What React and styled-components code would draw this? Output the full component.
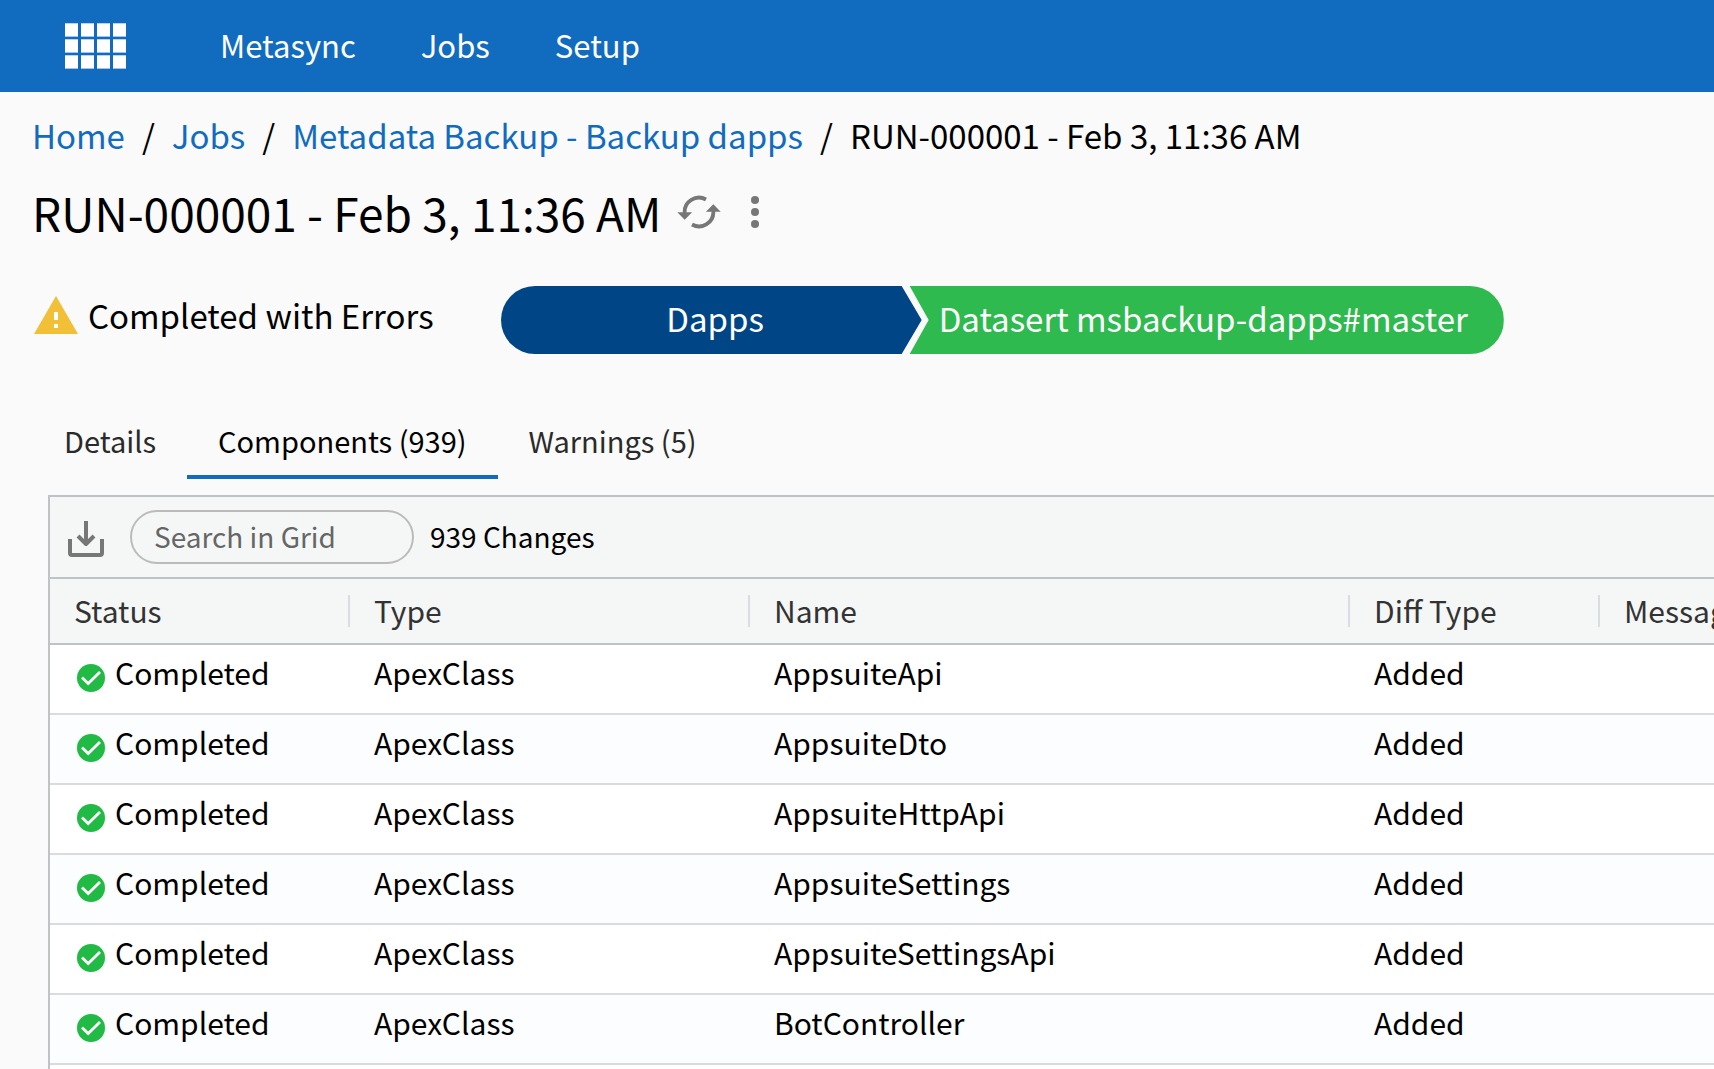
import React from 'react'
import styled, { createGlobalStyle } from 'styled-components'

const GlobalStyle = createGlobalStyle`
  * {
    box-sizing: border-box;
  }

  body {
    margin: 0;
    background: #fafafa;
    color: #000;
    font-family: "Noto Sans CJK SC", "Noto Sans", sans-serif;
    font-size: 30px;
    line-height: 40px;
  }

  button, input {
    font: inherit;
    color: inherit;
  }

  a {
    text-decoration: none;
  }
`;

const Page = styled.div`
  display: flex;
  flex-direction: column;
  height: 100vh;
  overflow: hidden;
`;

const TopBar = styled.header`
  display: flex;
  flex: none;
  align-items: center;
  height: 92px;
  padding: 0 64px;
  background: #116cbf;
  color: #fff;
`;

const AppButton = styled.button`
  display: flex;
  padding: 0;
  border: 0;
  background: none;
  cursor: pointer;
`;

const Nav = styled.nav`
  display: flex;
  gap: 65px;
  margin-left: 93px;
  padding-bottom: 2px;
  font-size: 31px;
`;

const NavLink = styled.a`
  color: #fff;
`;

const Breadcrumb = styled.nav`
  display: flex;
  flex: none;
  gap: 17px;
  padding: 19px 32px 0;
  font-size: 33px;
  line-height: 48px;
  white-space: nowrap;

  a {
    color: #116cbf;
  }
`;

const TitleRow = styled.div`
  display: flex;
  flex: none;
  align-items: center;
  gap: 16px;
  padding: 21px 32px 0;
`;

const Title = styled.h1`
  margin: 0;
  font-size: 46px;
  font-weight: 400;
  line-height: 64px;
`;

const Actions = styled.div`
  display: flex;
  gap: 30px;
`;

const IconButton = styled.button`
  display: flex;
  align-items: center;
  padding: 0;
  border: 0;
  background: none;
  color: #777;
  cursor: pointer;
`;

const Summary = styled.div`
  display: flex;
  flex: none;
  align-items: center;
  gap: 67px;
  padding: 42px 32px 0;
  font-size: 33px;
`;

const State = styled.div`
  display: flex;
  align-items: center;
  gap: 10px;
  padding-bottom: 10px;
`;

const Flow = styled.div`
  display: flex;
  height: 68px;
  color: #fff;
`;

const FlowStep = styled.div`
  display: flex;
  align-items: center;
  justify-content: center;
`;

const Source = styled(FlowStep)`
  width: 421px;
  padding: 0 0 4px 8px;
  border-radius: 34px 0 0 34px;
  background: #004586;
  clip-path: polygon(0 0, calc(100% - 20px) 0, 100% 50%, calc(100% - 20px) 100%, 0 100%);
`;

const Target = styled(FlowStep)`
  margin-left: -12px;
  padding: 0 36px 4px 29px;
  border-radius: 0 34px 34px 0;
  background: #2fba4f;
  clip-path: polygon(0 0, 100% 0, 100% 100%, 0 100%, 19px 50%);
`;

const Tabs = styled.div`
  display: flex;
  flex: none;
  padding: 57px 33px 0;
  font-size: 29px;
`;

const Tab = styled.button`
  height: 68px;
  padding: 0 31px 6px;
  border: 0;
  border-bottom: 4px solid ${p => (p.$active ? '#116cbf' : 'transparent')};
  background: none;
  color: ${p => (p.$active ? '#000' : '#2a2a2a')};
  cursor: pointer;
`;

const Panel = styled.section`
  flex: 1;
  margin: 16px 0 0 48px;
  border: solid #bdc3c7;
  border-width: 2px 0 0 2px;
  background: #fff;
  overflow: hidden;
`;

const Toolbar = styled.div`
  display: flex;
  align-items: center;
  gap: 16px;
  height: 82px;
  padding: 0 16px;
  border-bottom: 2px solid #bdc3c7;
  background: #f5f7f7;
  font-size: 28px;
`;

const Search = styled.input`
  width: 284px;
  height: 54px;
  margin-left: 8px;
  padding: 0 22px 2px;
  border: 2px solid #bbb;
  border-radius: 27px;
  background: transparent;

  &::placeholder {
    color: #666;
    opacity: 1;
  }
`;

const Count = styled.span`
  padding-bottom: 2px;
`;

const Grid = styled.table`
  width: 1850px;
  table-layout: fixed;
  border-collapse: separate;
  border-spacing: 0;
`;

const HeadCell = styled.th`
  width: ${p => p.$width}px;
  height: 66px;
  padding: 0;
  border-bottom: 2px solid #bdc3c7;
  background: #f5f7f7;
  color: #333;
  font-size: 30px;
  font-weight: 400;
  text-align: left;
`;

const HeadLabel = styled.div`
  height: 32px;
  padding-left: 24px;
  border-right: 2px solid #d9dce0;
  line-height: 30px;
`;

const Row = styled.tr`
  background: ${p => (p.$odd ? '#fcfdfe' : '#fff')};
`;

const Cell = styled.td`
  height: 70px;
  padding: 0 24px 14px;
  border-bottom: 2px solid #d9dcde;
  white-space: nowrap;
`;

const CellStatus = styled.div`
  display: flex;
  align-items: flex-end;
  gap: 10px;
  padding-left: 3px;
`;

const COLUMNS = [
  { label: 'Status', width: 300 },
  { label: 'Type', width: 400 },
  { label: 'Name', width: 600 },
  { label: 'Diff Type', width: 250 },
  { label: 'Message', width: 300 },
];

const NAMES = [
  'AppsuiteApi',
  'AppsuiteDto',
  'AppsuiteHttpApi',
  'AppsuiteSettings',
  'AppsuiteSettingsApi',
  'BotController',
];

const RUN = 'RUN-000001 - Feb 3, 11:36 AM';

const AppsIcon = () => (
  <svg width="63" height="46" viewBox="0 0 63 46" fill="#fff" aria-hidden="true">
    {[0, 1, 2].map(row =>
      [0, 1, 2, 3].map(col => (
        <rect key={`${row}-${col}`} x={1 + col * 16} y={0.3 + row * 16} width="13" height="13.3" />
      ))
    )}
  </svg>
)

const RefreshIcon = () => (
  <svg width="44" height="34" viewBox="0 0 44 34" aria-hidden="true">
    <g fill="none" stroke="currentColor" strokeWidth="3.8">
      <path d="M7.7 18A14.3 14.3 0 0 1 29 4.5" />
      <path d="M36.3 16A14.3 14.3 0 0 1 15 29.5" />
    </g>
    <path fill="currentColor" d="M.3 17.2h14.8l-7.4 7.6zM28.9 16.8h14.8l-7.4-7.6z" />
  </svg>
)

const MoreIcon = () => (
  <svg width="8" height="32" viewBox="0 0 8 32" fill="currentColor" aria-hidden="true">
    <circle cx="4" cy="4" r="4" />
    <circle cx="4" cy="16" r="4" />
    <circle cx="4" cy="28" r="4" />
  </svg>
)

const WarningIcon = () => (
  <svg width="46" height="38" viewBox="0 0 46 38" aria-hidden="true">
    <path fill="#f2c037" d="M2 38h44L24 0z" />
    <path fill="#fff" d="M22 16h4v8h-4zM22 28h4v4h-4z" />
  </svg>
)

const DownloadIcon = () => (
  <svg width="40" height="44" viewBox="0 0 40 44" fill="none" stroke="currentColor" strokeWidth="4" aria-hidden="true">
    <path d="M4 24v14q0 2 2 2h28q2 0 2-2V24" />
    <path d="M20 6v24" />
    <path d="M12 21l8 8 8-8" strokeLinejoin="round" />
  </svg>
)

const CheckIcon = () => (
  <svg width="28" height="28" viewBox="0 0 28 28" aria-hidden="true">
    <circle cx="14" cy="14" r="14" fill="#21ba45" />
    <path d="M5 13.5l6.2 6L23 8" fill="none" stroke="#fff" strokeWidth="2.8" />
  </svg>
)

const App = () => {
  return (
    <Page>
      <GlobalStyle />
      <TopBar>
        <AppButton aria-label="Apps"><AppsIcon /></AppButton>
        <Nav>
          <NavLink href="#metasync">Metasync</NavLink>
          <NavLink href="#jobs">Jobs</NavLink>
          <NavLink href="#setup">Setup</NavLink>
        </Nav>
      </TopBar>

      <Breadcrumb aria-label="Breadcrumb">
        <a href="#home">Home</a>
        <span>/</span>
        <a href="#jobs">Jobs</a>
        <span>/</span>
        <a href="#backup">Metadata Backup - Backup dapps</a>
        <span>/</span>
        <span>{RUN}</span>
      </Breadcrumb>

      <TitleRow>
        <Title>{RUN}</Title>
        <Actions>
          <IconButton aria-label="Refresh"><RefreshIcon /></IconButton>
          <IconButton aria-label="More"><MoreIcon /></IconButton>
        </Actions>
      </TitleRow>

      <Summary>
        <State>
          <WarningIcon />
          Completed with Errors
        </State>
        <Flow>
          <Source>Dapps</Source>
          <Target>Datasert msbackup-dapps#master</Target>
        </Flow>
      </Summary>

      <Tabs role="tablist">
        <Tab role="tab">Details</Tab>
        <Tab role="tab" aria-selected="true" $active>Components (939)</Tab>
        <Tab role="tab">Warnings (5)</Tab>
      </Tabs>

      <Panel>
        <Toolbar>
          <IconButton aria-label="Download"><DownloadIcon /></IconButton>
          <Search type="text" aria-label="Search in Grid" placeholder="Search in Grid" />
          <Count>939 Changes</Count>
        </Toolbar>
        <Grid>
          <thead>
            <tr>
              {COLUMNS.map(({ label, width }) => (
                <HeadCell key={label} $width={width}>
                  <HeadLabel>{label}</HeadLabel>
                </HeadCell>
              ))}
            </tr>
          </thead>
          <tbody>
            {NAMES.map((name, i) => (
              <Row key={name} $odd={i % 2 === 1}>
                <Cell>
                  <CellStatus><CheckIcon />Completed</CellStatus>
                </Cell>
                <Cell>ApexClass</Cell>
                <Cell>{name}</Cell>
                <Cell>Added</Cell>
                <Cell />
              </Row>
            ))}
          </tbody>
        </Grid>
      </Panel>
    </Page>
  )
}

export default App
